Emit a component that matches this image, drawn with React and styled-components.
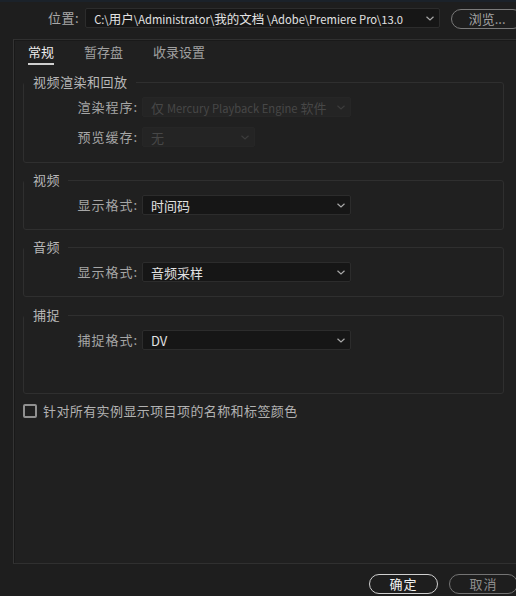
import React from "react";
import styled, { createGlobalStyle } from "styled-components";

const GlobalStyle = createGlobalStyle`
  html, body {
    margin: 0;
    padding: 0;
    background: #1e1e1e;
  }
  body {
    font-family: "Noto Sans CJK SC", "Noto Sans", sans-serif;
    font-size: 13px;
    color: #b4b4b4;
  }
`;

const Page = styled.div`
  width: 516px;
  height: 596px;
  overflow: hidden;
  background: #1e1e1e;
  border-top: 2px solid #1b222a;
  box-sizing: border-box;
`;

const Header = styled.div`
  height: 37px;
  display: flex;
  align-items: flex-start;
  padding: 6px 0 0 48px;
  box-sizing: border-box;
`;

const HeaderLabel = styled.span`
  flex: none;
  white-space: nowrap;
  line-height: 20px;
  color: #a9a9a9;
  margin-right: 6px;
  letter-spacing: 0.5px;
`;

const Select = styled.div`
  flex: none;
  display: flex;
  align-items: center;
  justify-content: space-between;
  box-sizing: border-box;
  width: ${(p) => p.$width}px;
  height: 20px;
  padding: 0 5px 0 8px;
  background: ${(p) => (p.$disabled ? "#242424" : "#161616")};
  border: 1px solid ${(p) => (p.$disabled ? "#262626" : "#2c2c2c")};
  border-radius: 2px;
  color: ${(p) => (p.$disabled ? "#474747" : "#e2e2e2")};
  font-size: ${(p) => (p.$small ? 12.5 : 13)}px;
  white-space: nowrap;
  overflow: hidden;
`;

const Latin = styled.span`
  font-size: 11.2px;
`;

const Chevron = ({ color = "#a8a8a8" }) => (
  <svg width="8" height="5" viewBox="0 0 8 5" style={{ flex: "none" }}>
    <polyline points="0.5,0.8 4,4 7.5,0.8" fill="none" stroke={color} strokeWidth="1.2" />
  </svg>
);

const PillButton = styled.button`
  box-sizing: border-box;
  width: ${(p) => p.$width || 69}px;
  height: 20px;
  margin: 0;
  padding: 0;
  background: transparent;
  border: 1.5px solid ${(p) => (p.$primary ? "#d0d0d0" : "#747474")};
  border-radius: 10px;
  color: ${(p) => (p.$primary ? "#f2f2f2" : "#8e8e8e")};
  font-family: inherit;
  font-size: 13px;
  line-height: 16px;
  letter-spacing: 1px;
  flex: none;
`;

const BrowseButton = styled(PillButton)`
  margin: 1px 0 0 11px;
  color: #a4a4a4;
  border-color: #7a7a7a;
  letter-spacing: 0;
`;

const Panel = styled.div`
  margin-left: 13px;
  width: 520px;
  height: 525px;
  box-sizing: border-box;
  background: #202020;
  border-top: 1px solid #303030;
  border-left: 1px solid #343434;
  border-bottom: 1px solid #303030;
  box-shadow: inset 1px 1px 0 #191919;
  padding: 0 0 0 9px;
`;

const Tabs = styled.div`
  display: flex;
  gap: 30px;
  padding: 4px 0 0 5px;
`;

const Tab = styled.div`
  line-height: 16px;
  padding-bottom: 3px;
  border-bottom: 2px solid ${(p) => (p.$active ? "#cfcfcf" : "transparent")};
  color: ${(p) => (p.$active ? "#ececec" : "#a0a0a0")};
`;

const Group = styled.fieldset`
  width: 481px;
  box-sizing: border-box;
  margin: ${(p) => p.$gap || 9}px 0 0 0;
  padding: 0;
  border: 1px solid #2f2f2f;
  border-radius: 3px;
  min-width: 0;
`;

const Legend = styled.legend`
  margin: 0;
  padding: 0 8px 0 9px;
  line-height: 16px;
  color: #b8b8b8;
  letter-spacing: 0.5px;
`;

const GroupBody = styled.div`
  display: flex;
  flex-direction: column;
  gap: 10px;
  padding: ${(p) => p.$top || 7}px 0 ${(p) => p.$bottom}px 0;
`;

const Row = styled.div`
  display: flex;
  align-items: center;
  gap: 4px;
`;

const RowLabel = styled.span`
  width: 114px;
  text-align: right;
  color: #a6a6a6;
  line-height: 20px;
  letter-spacing: 1px;
`;

const CheckRow = styled.label`
  display: flex;
  align-items: center;
  gap: 6px;
  margin-top: 9px;
  color: #b2b2b2;
  letter-spacing: 0.4px;
  line-height: 16px;
`;

const Box = styled.span`
  width: 14px;
  height: 14px;
  box-sizing: border-box;
  border: 2px solid #909090;
  border-radius: 2px;
  flex: none;
`;

const Footer = styled.div`
  display: flex;
  gap: 11px;
  padding: 10px 0 0 369px;
`;

const Field = ({ label, children, width = 209, disabled }) => (
  <Row>
    <RowLabel>{label}</RowLabel>
    <Select $width={width} $disabled={disabled}>
      <span>{children}</span>
      <Chevron color={disabled ? "#3c3c3c" : "#a8a8a8"} />
    </Select>
  </Row>
);

export default function App() {
  return (
    <>
      <GlobalStyle />
      <Page>
        <Header>
          <HeaderLabel>位置:</HeaderLabel>
          <Select $width={355} $small>
            <span>
              <Latin>C:\</Latin>用户<Latin>\Administrator\</Latin>我的文档
              <Latin> \Adobe\Premiere Pro\13.0</Latin>
            </span>
            <Chevron />
          </Select>
          <BrowseButton $width={72}>浏览...</BrowseButton>
        </Header>
        <Panel>
          <Tabs>
            <Tab $active>常规</Tab>
            <Tab>暂存盘</Tab>
            <Tab>收录设置</Tab>
          </Tabs>
          <Group $gap={9}>
            <Legend>视频渲染和回放</Legend>
            <GroupBody $bottom={15}>
              <Field label="渲染程序:" disabled>
                仅 <Latin>Mercury Playback Engine</Latin> 软件
              </Field>
              <Field label="预览缓存:" width={113} disabled>
                无
              </Field>
            </GroupBody>
          </Group>
          <Group>
            <Legend>视频</Legend>
            <GroupBody $bottom={14}>
              <Field label="显示格式:">时间码</Field>
            </GroupBody>
          </Group>
          <Group>
            <Legend>音频</Legend>
            <GroupBody $bottom={14}>
              <Field label="显示格式:">音频采样</Field>
            </GroupBody>
          </Group>
          <Group $gap={10}>
            <Legend>捕捉</Legend>
            <GroupBody $bottom={43}>
              <Field label="捕捉格式:">DV</Field>
            </GroupBody>
          </Group>
          <CheckRow>
            <Box />
            针对所有实例显示项目项的名称和标签颜色
          </CheckRow>
        </Panel>
        <Footer>
          <PillButton $primary>确定</PillButton>
          <PillButton>取消</PillButton>
        </Footer>
      </Page>
    </>
  );
}
